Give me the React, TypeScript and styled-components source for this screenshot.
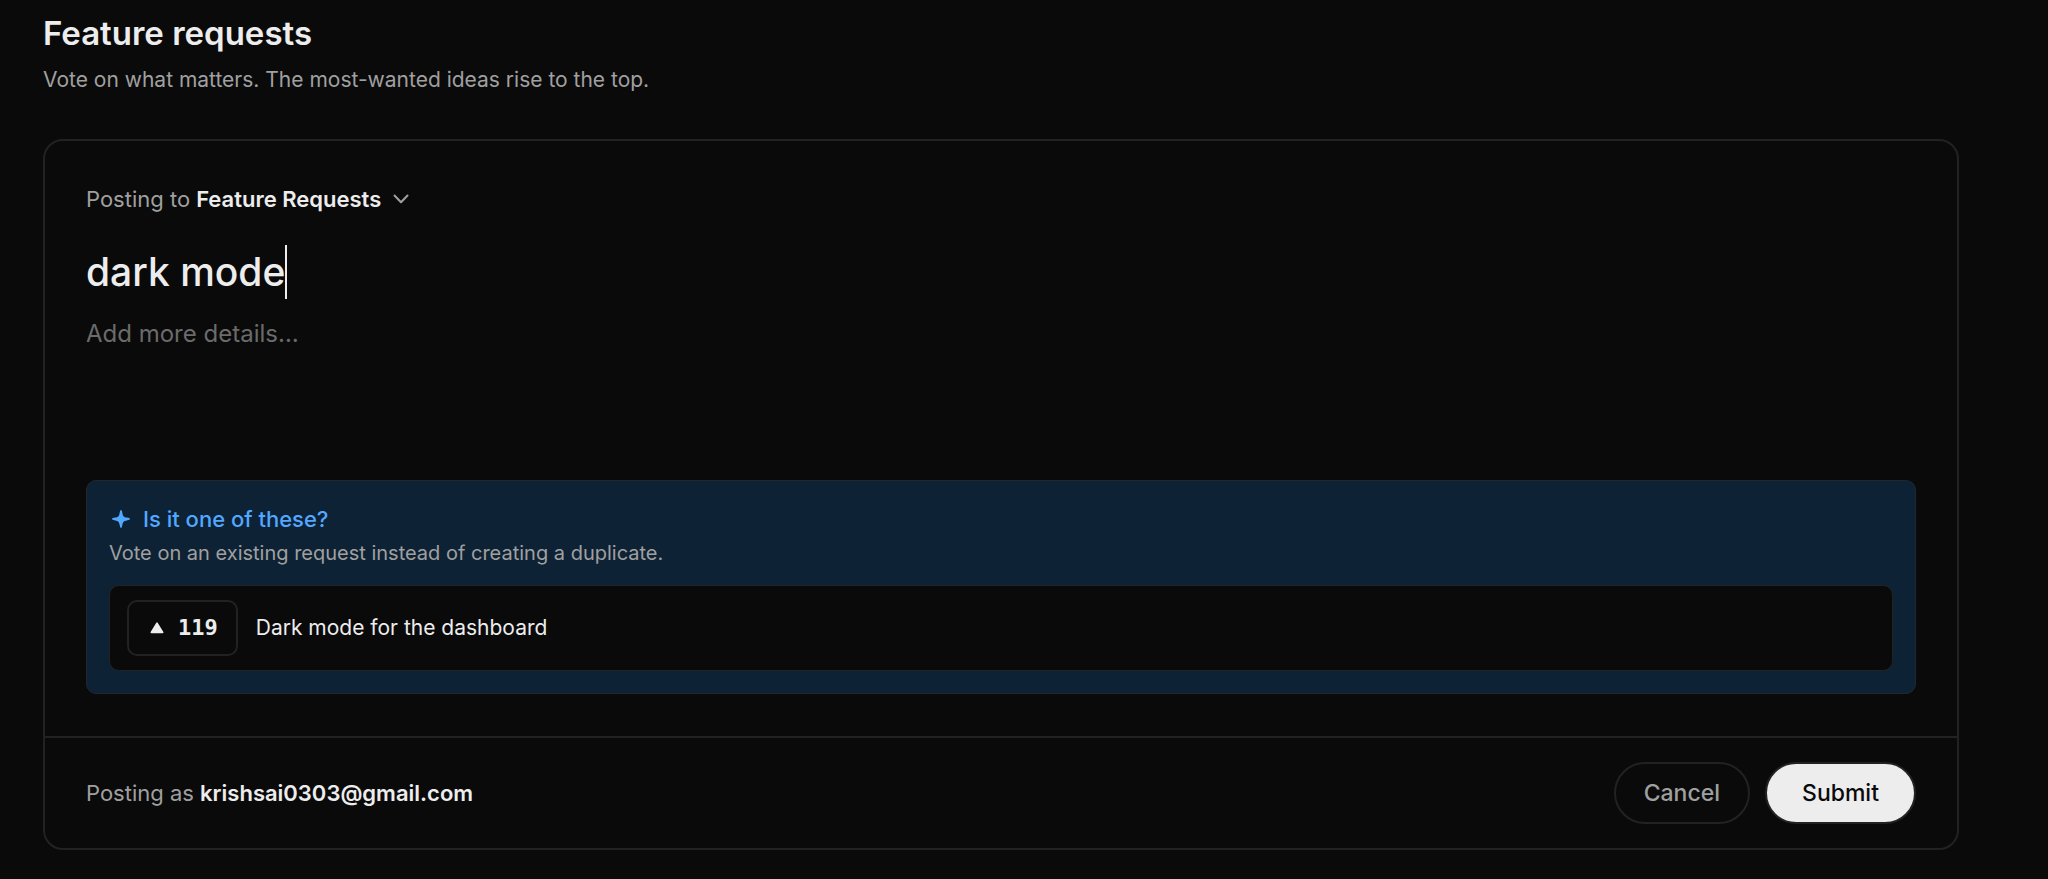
import React, { useState } from "react";
import styled, { createGlobalStyle } from "styled-components";

const color = {
  page: "#0a0a0a",
  line: "#222222",
  text: "#ededed",
  muted: "#a0a0a0",
  faint: "#6b6b6b",
  accent: "#52a8ff",
  panel: "#0d2235",
};

const GlobalStyle = createGlobalStyle`
  * { box-sizing: border-box; }
  body {
    margin: 0;
    background: ${color.page};
    color: ${color.text};
    font-family: Inter, "Liberation Sans", sans-serif;
    font-size: 22px;
    line-height: 32px;
  }
  input, textarea, select, button {
    margin: 0;
    padding: 0;
    border: 0;
    background: none;
    color: inherit;
    font: inherit;
    outline: none;
  }
`;

const Page = styled.main`
  padding: 12px 89px 28px 43px;
`;

const Title = styled.h1`
  margin: 0;
  font-size: 33px;
  line-height: 42px;
  font-weight: 600;
`;

const Subtitle = styled.p`
  margin: 10px 0 43px;
  color: ${color.muted};
  font-size: 21px;
`;

const Card = styled.form`
  border: 2px solid ${color.line};
  border-radius: 20px;
`;

const CardBody = styled.div`
  padding: 42px 41px;
`;

const BoardRow = styled.div`
  display: flex;
  align-items: center;
  gap: 6px;
  color: ${color.muted};
`;

const BoardPicker = styled.div`
  display: flex;
  align-items: center;
  gap: 12px;
`;

const BoardSelect = styled.select`
  appearance: none;
  field-sizing: content;
  color: ${color.text};
  font-weight: 600;
`;

const TitleRow = styled.div`
  display: flex;
  align-items: center;
  height: 54px;
  margin-top: 30px;
`;

const TitleInput = styled.input`
  field-sizing: content;
  caret-color: transparent;
  font-size: 39px;
  line-height: 54px;
  font-weight: 500;
`;

const Caret = styled.span`
  width: 2px;
  height: 54px;
  background: ${color.text};
`;

const Details = styled.textarea`
  display: block;
  width: 100%;
  height: 128px;
  margin: 17px 0 36px;
  font-size: 24px;
  line-height: 36px;
  resize: none;
  &::placeholder {
    color: ${color.faint};
    opacity: 1;
  }
`;

const Suggestions = styled.section`
  padding: 22px;
  border: 1px solid #20282e;
  border-radius: 10px;
  background: ${color.panel};
`;

const SuggestionsTitle = styled.h2`
  display: flex;
  align-items: center;
  gap: 12px;
  margin: 0;
  padding-left: 2px;
  color: ${color.accent};
  font-size: 22px;
  font-weight: 500;
`;

const SuggestionsHint = styled.p`
  margin: 2px 0 16px;
  color: ${color.muted};
  font-size: 20px;
`;

const Suggestion = styled.div`
  display: flex;
  align-items: center;
  gap: 18px;
  padding: 14px 17px;
  border: 1px solid ${color.line};
  border-radius: 10px;
  background: ${color.page};
  font-size: 21px;
`;

const VoteButton = styled.button`
  display: flex;
  align-items: center;
  gap: 14px;
  height: 56px;
  padding: 0 18px 0 21px;
  border: 2px solid ${color.line};
  border-radius: 10px;
  font-family: "DejaVu Sans Mono", monospace;
  font-size: 22px;
  font-weight: 700;
`;

const CardFooter = styled.footer`
  display: flex;
  align-items: center;
  gap: 15px;
  padding: 24px 41px;
  border-top: 2px solid ${color.line};
`;

const Author = styled.p`
  flex: 1;
  margin: 0;
  color: ${color.muted};
  strong {
    color: ${color.text};
    font-weight: 600;
  }
`;

const PillButton = styled.button<{ $primary?: boolean }>`
  height: 62px;
  padding: 0 ${(p) => (p.$primary ? 35 : 28)}px;
  border: 2px solid ${color.line};
  border-radius: 31px;
  background: ${(p) => (p.$primary ? color.text : "transparent")};
  color: ${(p) => (p.$primary ? color.page : color.muted)};
  font-size: 23px;
  font-weight: 500;
`;

export default function App() {
  const [title, setTitle] = useState("dark mode");
  const [details, setDetails] = useState("");

  return (
    <>
      <GlobalStyle />
      <Page>
        <Title>Feature requests</Title>
        <Subtitle>Vote on what matters. The most-wanted ideas rise to the top.</Subtitle>
        <Card onSubmit={(e) => e.preventDefault()}>
          <CardBody>
            <BoardRow>
              <label htmlFor="board">Posting to</label>
              <BoardPicker>
                <BoardSelect id="board">
                  <option>Feature Requests</option>
                </BoardSelect>
                <svg width="16" height="10" viewBox="0 0 16 10" fill="none" stroke={color.muted} strokeWidth="2" strokeLinecap="round" strokeLinejoin="round" aria-hidden="true">
                  <path d="M1.500 1.500 8 8.300l6.500-6.800" />
                </svg>
              </BoardPicker>
            </BoardRow>
            <TitleRow>
              <TitleInput aria-label="Title" value={title} onChange={(e) => setTitle(e.target.value)} />
              <Caret />
            </TitleRow>
            <Details
              aria-label="Details"
              placeholder="Add more details…"
              value={details}
              onChange={(e) => setDetails(e.target.value)}
            />
            <Suggestions>
              <SuggestionsTitle>
                <svg width="20" height="20" viewBox="0 0 20 20" fill={color.accent} aria-hidden="true">
                  <path d="M10 1C10.700 1 11 2.200 11.400 4.200C12 7.300 12.700 8 15.800 8.600C17.800 9 19 9.300 19 10C19 10.700 17.800 11 15.800 11.400C12.700 12 12 12.700 11.400 15.800C11 17.800 10.700 19 10 19C9.300 19 9 17.800 8.600 15.800C8 12.700 7.300 12 4.200 11.400C2.200 11 1 10.700 1 10C1 9.300 2.200 9 4.200 8.600C7.300 8 8 7.300 8.600 4.200C9 2.200 9.300 1 10 1Z" />
                </svg>
                Is it one of these?
              </SuggestionsTitle>
              <SuggestionsHint>Vote on an existing request instead of creating a duplicate.</SuggestionsHint>
              <Suggestion>
                <VoteButton type="button" aria-label="Upvote, 119 votes">
                  <svg width="14" height="12" viewBox="0 0 14 12" fill={color.text} aria-hidden="true">
                    <path d="M6.300 .7a.8.8 0 0 1 1.400 0l5.700 9.300a.8.8 0 0 1-.7 1.200H1.300a.8.8 0 0 1-.7-1.200Z" />
                  </svg>
                  119
                </VoteButton>
                <span>Dark mode for the dashboard</span>
              </Suggestion>
            </Suggestions>
          </CardBody>
          <CardFooter>
            <Author>
              Posting as <strong>krishsai0303@gmail.com</strong>
            </Author>
            <PillButton type="button">Cancel</PillButton>
            <PillButton type="submit" $primary>
              Submit
            </PillButton>
          </CardFooter>
        </Card>
      </Page>
    </>
  );
}
